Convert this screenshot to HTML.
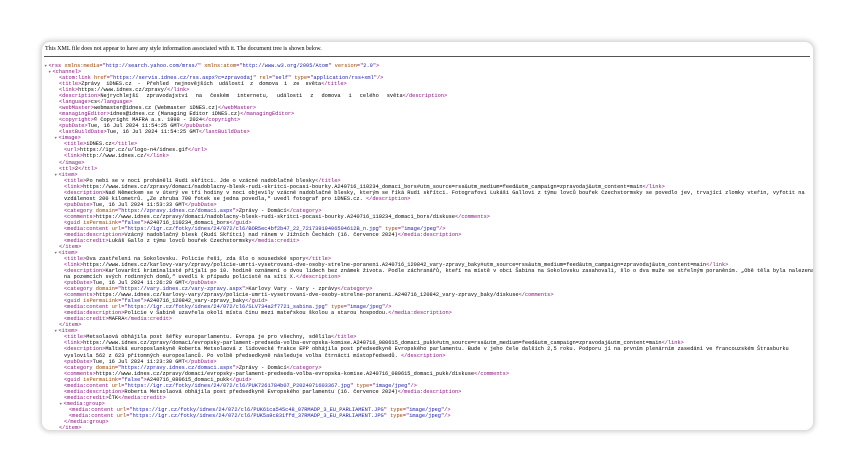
<!DOCTYPE html>
<html><head><meta charset="utf-8"><style>
html,body{margin:0;padding:0;background:#fff;width:855px;height:473px;overflow:hidden}
.card{position:absolute;left:42px;top:42px;width:771px;height:388px;background:#fff;border-radius:8px;box-shadow:0 0 5px 2px rgba(0,0,0,0.18);overflow:hidden}
.hdr{position:absolute;left:3px;top:4px;font:6px "Liberation Serif",serif;color:#000;white-space:nowrap}
.rule{position:absolute;left:2px;right:3px;top:14px;border-top:1px solid #555}
.code{position:absolute;left:0;top:21px;font:5.3px/6.04px "Liberation Mono",monospace;color:#000}
.l{white-space:pre;height:6.04px}
.t{color:#881280}.a{color:#994500}.v{color:#1a1aa6}
.ar{color:#777;display:inline-block;width:4px;margin-left:-4.5px;font-size:4px}
</style></head><body>
<div class="card">
<div class="hdr">This XML file does not appear to have any style information associated with it. The document tree is shown below.</div>
<div class="rule"></div>
<div class="code">
<div class="l" style="padding-left:7px"><span class="ar">▼</span><span class="t">&lt;rss</span> <span class="a">xmlns:media</span><span class="t">="</span><span class="v">http://search.yahoo.com/mrss/</span><span class="t">"</span> <span class="a">xmlns:atom</span><span class="t">="</span><span class="v">http://www.w3.org/2005/Atom</span><span class="t">"</span> <span class="a">version</span><span class="t">="</span><span class="v">2.0</span><span class="t">"&gt;</span></div>
<div class="l" style="padding-left:11px"><span class="ar">▼</span><span class="t">&lt;channel&gt;</span></div>
<div class="l" style="padding-left:17px"><span class="t">&lt;atom:link</span> <span class="a">href</span><span class="t">="</span><span class="v">https://servis.idnes.cz/rss.aspx?c=zpravodaj</span><span class="t">"</span> <span class="a">rel</span><span class="t">="</span><span class="v">self</span><span class="t">"</span> <span class="a">type</span><span class="t">="</span><span class="v">application/rss+xml</span><span class="t">"/&gt;</span></div>
<div class="l" style="padding-left:17px"><span class="t">&lt;title&gt;</span><span style="word-spacing:2.7px">Zprávy iDNES.cz - Přehled nejnovějších událostí z domova i ze světa</span><span class="t">&lt;/title&gt;</span></div>
<div class="l" style="padding-left:17px"><span class="t">&lt;link&gt;</span>https://www.idnes.cz/zpravy/<span class="t">&lt;/link&gt;</span></div>
<div class="l" style="padding-left:17px"><span class="t">&lt;description&gt;</span><span style="word-spacing:4.8px">Nejrychlejší zpravodajství na českém internetu, události z domova i celého světa</span><span class="t">&lt;/description&gt;</span></div>
<div class="l" style="padding-left:17px"><span class="t">&lt;language&gt;</span>cs<span class="t">&lt;/language&gt;</span></div>
<div class="l" style="padding-left:17px"><span class="t">&lt;webMaster&gt;</span>webmaster@idnes.cz (Webmaster iDNES.cz)<span class="t">&lt;/webMaster&gt;</span></div>
<div class="l" style="padding-left:17px"><span class="t">&lt;managingEditor&gt;</span>idnes@idnes.cz (Managing Editor iDNES.cz)<span class="t">&lt;/managingEditor&gt;</span></div>
<div class="l" style="padding-left:17px"><span class="t">&lt;copyright&gt;</span>© Copyright MAFRA a.s. 1998 - 2024<span class="t">&lt;/copyright&gt;</span></div>
<div class="l" style="padding-left:17px"><span class="t">&lt;pubDate&gt;</span>Tue, 16 Jul 2024 11:54:25 GMT<span class="t">&lt;/pubDate&gt;</span></div>
<div class="l" style="padding-left:17px"><span class="t">&lt;lastBuildDate&gt;</span>Tue, 16 Jul 2024 11:54:25 GMT<span class="t">&lt;/lastBuildDate&gt;</span></div>
<div class="l" style="padding-left:17px"><span class="ar">▼</span><span class="t">&lt;image&gt;</span></div>
<div class="l" style="padding-left:22px"><span class="t">&lt;title&gt;</span>iDNES.cz<span class="t">&lt;/title&gt;</span></div>
<div class="l" style="padding-left:22px"><span class="t">&lt;url&gt;</span>https://1gr.cz/u/logo-n4/idnes.gif<span class="t">&lt;/url&gt;</span></div>
<div class="l" style="padding-left:22px"><span class="t">&lt;link&gt;</span>http://www.idnes.cz/<span class="t">&lt;/link&gt;</span></div>
<div class="l" style="padding-left:17px"><span class="t">&lt;/image&gt;</span></div>
<div class="l" style="padding-left:17px"><span class="t">&lt;ttl&gt;</span>2<span class="t">&lt;/ttl&gt;</span></div>
<div class="l" style="padding-left:17px"><span class="ar">▼</span><span class="t">&lt;item&gt;</span></div>
<div class="l" style="padding-left:22px"><span class="t">&lt;title&gt;</span>Po nebi se v noci proháněli Rudí skřítci. Jde o vzácné nadoblačné blesky<span class="t">&lt;/title&gt;</span></div>
<div class="l" style="padding-left:22px"><span class="t">&lt;link&gt;</span>https://www.idnes.cz/zpravy/domaci/nadoblacny-blesk-rudi-skritci-pocasi-bourky.A240716_110234_domaci_bors#utm_source=rss&amp;utm_medium=feed&amp;utm_campaign=zpravodaj&amp;utm_content=main<span class="t">&lt;/link&gt;</span></div>
<div class="l" style="padding-left:22px"><span class="t">&lt;description&gt;</span>Nad Německem se v úterý ve tři hodiny v noci objevily vzácné nadoblačné blesky, kterým se říká Rudí skřítci. Fotografovi Lukáši Gallovi z týmu lovců bouřek Czechstormsky se povedlo jev, trvající zlomky vteřin, vyfotit na</div>
<div class="l" style="padding-left:22px">vzdálenost 200 kilometrů. „Ze zhruba 700 fotek se jedna povedla,“ uvedl fotograf pro iDNES.cz. <span class="t">&lt;/description&gt;</span></div>
<div class="l" style="padding-left:22px"><span class="t">&lt;pubDate&gt;</span>Tue, 16 Jul 2024 11:53:33 GMT<span class="t">&lt;/pubDate&gt;</span></div>
<div class="l" style="padding-left:22px"><span class="t">&lt;category</span> <span class="a">domain</span><span class="t">="</span><span class="v">https://zpravy.idnes.cz/domaci.aspx</span><span class="t">"&gt;</span>Zprávy - Domácí<span class="t">&lt;/category&gt;</span></div>
<div class="l" style="padding-left:22px"><span class="t">&lt;comments&gt;</span>https://www.idnes.cz/zpravy/domaci/nadoblacny-blesk-rudi-skritci-pocasi-bourky.A240716_110234_domaci_bors/diskuse<span class="t">&lt;/comments&gt;</span></div>
<div class="l" style="padding-left:22px"><span class="t">&lt;guid</span> <span class="a">isPermaLink</span><span class="t">="</span><span class="v">false</span><span class="t">"&gt;</span>A240716_110234_domaci_bors<span class="t">&lt;/guid&gt;</span></div>
<div class="l" style="padding-left:22px"><span class="t">&lt;media:content</span> <span class="a">url</span><span class="t">="</span><span class="v">https://1gr.cz/fotky/idnes/24/072/cl6/BOR5ec4bf2b47_22_72173919406504612B_n.jpg</span><span class="t">"</span> <span class="a">type</span><span class="t">="</span><span class="v">image/jpeg</span><span class="t">"/&gt;</span></div>
<div class="l" style="padding-left:22px"><span class="t">&lt;media:description&gt;</span>Vzácný nadoblačný blesk (Rudí Skřítci) nad ránem v Jižních Čechách (16. července 2024)<span class="t">&lt;/media:description&gt;</span></div>
<div class="l" style="padding-left:22px"><span class="t">&lt;media:credit&gt;</span>Lukáš Gallo z týmu lovců bouřek Czechstormsky<span class="t">&lt;/media:credit&gt;</span></div>
<div class="l" style="padding-left:17px"><span class="t">&lt;/item&gt;</span></div>
<div class="l" style="padding-left:17px"><span class="ar">▼</span><span class="t">&lt;item&gt;</span></div>
<div class="l" style="padding-left:22px"><span class="t">&lt;title&gt;</span>Dva zastřelení na Sokolovsku. Policie řeší, zda šlo o sousedské spory<span class="t">&lt;/title&gt;</span></div>
<div class="l" style="padding-left:22px"><span class="t">&lt;link&gt;</span>https://www.idnes.cz/karlovy-vary/zpravy/policie-umrti-vysetrovani-dve-osoby-strelne-poraneni.A240716_120842_vary-zpravy_baky#utm_source=rss&amp;utm_medium=feed&amp;utm_campaign=zpravodaj&amp;utm_content=main<span class="t">&lt;/link&gt;</span></div>
<div class="l" style="padding-left:22px"><span class="t">&lt;description&gt;</span>Karlovarští kriminalisté přijali po 10. hodině oznámení o dvou lidech bez známek života. Podle záchranářů, kteří na místě v obci Šabina na Sokolovsku zasahovali, šlo o dva muže se střelným poraněním. „Obě těla byla nalezena</div>
<div class="l" style="padding-left:22px">na pozemcích svých rodinných domů,“ uvedli k případu policisté na síti X.<span class="t">&lt;/description&gt;</span></div>
<div class="l" style="padding-left:22px"><span class="t">&lt;pubDate&gt;</span>Tue, 16 Jul 2024 11:26:20 GMT<span class="t">&lt;/pubDate&gt;</span></div>
<div class="l" style="padding-left:22px"><span class="t">&lt;category</span> <span class="a">domain</span><span class="t">="</span><span class="v">https://vary.idnes.cz/vary-zpravy.aspx</span><span class="t">"&gt;</span>Karlovy Vary - Vary - zprávy<span class="t">&lt;/category&gt;</span></div>
<div class="l" style="padding-left:22px"><span class="t">&lt;comments&gt;</span>https://www.idnes.cz/karlovy-vary/zpravy/policie-umrti-vysetrovani-dve-osoby-strelne-poraneni.A240716_120842_vary-zpravy_baky/diskuse<span class="t">&lt;/comments&gt;</span></div>
<div class="l" style="padding-left:22px"><span class="t">&lt;guid</span> <span class="a">isPermaLink</span><span class="t">="</span><span class="v">false</span><span class="t">"&gt;</span>A240716_120842_vary-zpravy_baky<span class="t">&lt;/guid&gt;</span></div>
<div class="l" style="padding-left:22px"><span class="t">&lt;media:content</span> <span class="a">url</span><span class="t">="</span><span class="v">https://1gr.cz/fotky/idnes/24/072/cl6/SLV734a2f7721_sabina.jpg</span><span class="t">"</span> <span class="a">type</span><span class="t">="</span><span class="v">image/jpeg</span><span class="t">"/&gt;</span></div>
<div class="l" style="padding-left:22px"><span class="t">&lt;media:description&gt;</span>Policie v Šabině uzavřela okolí místa činu mezi mateřskou školou a starou hospodou.<span class="t">&lt;/media:description&gt;</span></div>
<div class="l" style="padding-left:22px"><span class="t">&lt;media:credit&gt;</span>MAFRA<span class="t">&lt;/media:credit&gt;</span></div>
<div class="l" style="padding-left:17px"><span class="t">&lt;/item&gt;</span></div>
<div class="l" style="padding-left:17px"><span class="ar">▼</span><span class="t">&lt;item&gt;</span></div>
<div class="l" style="padding-left:22px"><span class="t">&lt;title&gt;</span>Metsolaová obhájila post šéfky europarlamentu. Evropa je pro všechny, sdělila<span class="t">&lt;/title&gt;</span></div>
<div class="l" style="padding-left:22px"><span class="t">&lt;link&gt;</span>https://www.idnes.cz/zpravy/domaci/evropsky-parlament-predseda-volba-evropska-komise.A240716_080615_domaci_pukk#utm_source=rss&amp;utm_medium=feed&amp;utm_campaign=zpravodaj&amp;utm_content=main<span class="t">&lt;/link&gt;</span></div>
<div class="l" style="padding-left:22px"><span class="t">&lt;description&gt;</span>Maltská europoslankyně Roberta Metsolaová z lidovecké frakce EPP obhájila post předsedkyně Evropského parlamentu. Bude v jeho čele dalších 2,5 roku. Podporu jí na prvním plenárním zasedání ve francouzském Štrasburku</div>
<div class="l" style="padding-left:22px">vyslovila 562 z 623 přítomných europoslanců. Po volbě předsedkyně následuje volba čtrnácti místopředsedů. <span class="t">&lt;/description&gt;</span></div>
<div class="l" style="padding-left:22px"><span class="t">&lt;pubDate&gt;</span>Tue, 16 Jul 2024 11:23:30 GMT<span class="t">&lt;/pubDate&gt;</span></div>
<div class="l" style="padding-left:22px"><span class="t">&lt;category</span> <span class="a">domain</span><span class="t">="</span><span class="v">https://zpravy.idnes.cz/domaci.aspx</span><span class="t">"&gt;</span>Zprávy - Domácí<span class="t">&lt;/category&gt;</span></div>
<div class="l" style="padding-left:22px"><span class="t">&lt;comments&gt;</span>https://www.idnes.cz/zpravy/domaci/evropsky-parlament-predseda-volba-evropska-komise.A240716_080615_domaci_pukk/diskuse<span class="t">&lt;/comments&gt;</span></div>
<div class="l" style="padding-left:22px"><span class="t">&lt;guid</span> <span class="a">isPermaLink</span><span class="t">="</span><span class="v">false</span><span class="t">"&gt;</span>A240716_080615_domaci_pukk<span class="t">&lt;/guid&gt;</span></div>
<div class="l" style="padding-left:22px"><span class="t">&lt;media:content</span> <span class="a">url</span><span class="t">="</span><span class="v">https://1gr.cz/fotky/idnes/24/072/cl6/PUK7261784b07_P2024071603367.jpg</span><span class="t">"</span> <span class="a">type</span><span class="t">="</span><span class="v">image/jpeg</span><span class="t">"/&gt;</span></div>
<div class="l" style="padding-left:22px"><span class="t">&lt;media:description&gt;</span>Roberta Metsolaová obhájila post předsedkyně Evropského parlamentu (16. července 2024)<span class="t">&lt;/media:description&gt;</span></div>
<div class="l" style="padding-left:22px"><span class="t">&lt;media:credit&gt;</span>ČTK<span class="t">&lt;/media:credit&gt;</span></div>
<div class="l" style="padding-left:22px"><span class="ar">▼</span><span class="t">&lt;media:group&gt;</span></div>
<div class="l" style="padding-left:27px"><span class="t">&lt;media:content</span> <span class="a">url</span><span class="t">="</span><span class="v">https://1gr.cz/fotky/idnes/24/072/cl6/PUK61ca545c48_07RMADP_3_EU_PARLIAMENT.JPG</span><span class="t">"</span> <span class="a">type</span><span class="t">="</span><span class="v">image/jpeg</span><span class="t">"/&gt;</span></div>
<div class="l" style="padding-left:27px"><span class="t">&lt;media:content</span> <span class="a">url</span><span class="t">="</span><span class="v">https://1gr.cz/fotky/idnes/24/072/cl6/PUK5a9c831ffd_37RMADP_3_EU_PARLIAMENT.JPG</span><span class="t">"</span> <span class="a">type</span><span class="t">="</span><span class="v">image/jpeg</span><span class="t">"/&gt;</span></div>
<div class="l" style="padding-left:22px"><span class="t">&lt;/media:group&gt;</span></div>
<div class="l" style="padding-left:17px"><span class="t">&lt;/item&gt;</span></div>
</div>
</div>
</body></html>
